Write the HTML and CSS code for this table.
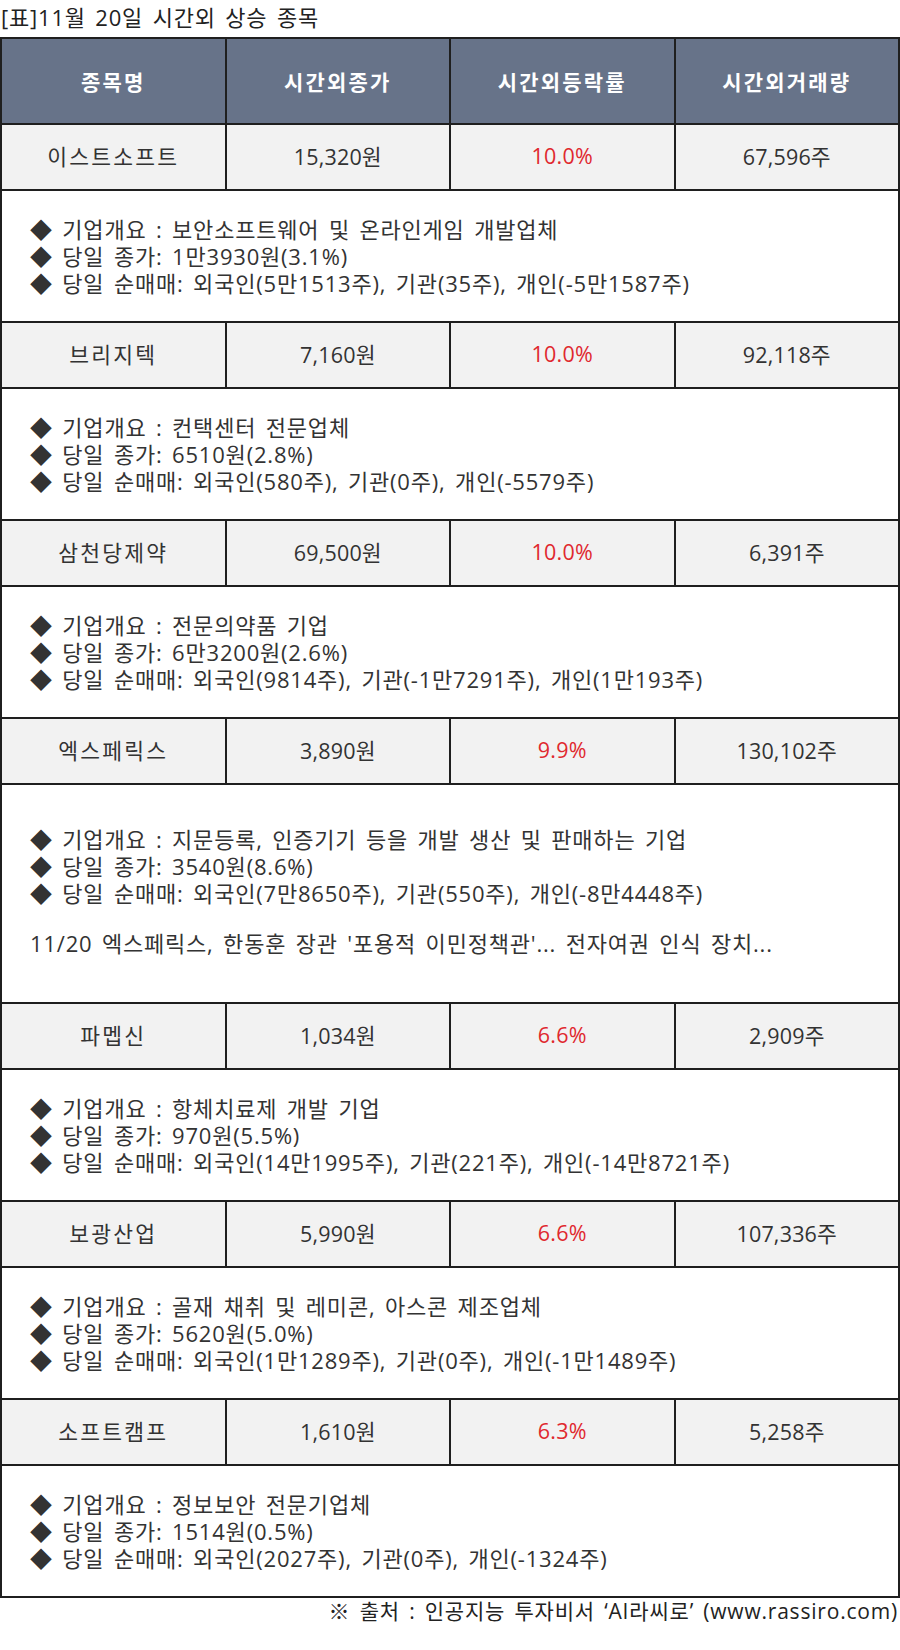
FILE: index.html
```html
<!DOCTYPE html>
<html lang="ko">
<head>
<meta charset="utf-8">
<title>11월 20일 시간외 상승 종목</title>
<link rel="stylesheet" href="styles.css">
</head>
<body>
<p class="title">[표]11월 20일 시간외 상승 종목</p>
<table class="stocks">
  <colgroup><col><col><col><col></colgroup>
  <thead>
    <tr><th>종목명</th><th>시간외종가</th><th>시간외등락률</th><th>시간외거래량</th></tr>
  </thead>
  <tbody>
    <tr class="row"><td class="name">이스트소프트</td><td>15,320원</td><td class="up">10.0%</td><td>67,596주</td></tr>
    <tr class="detail"><td colspan="4">
      <p>◆ 기업개요 : 보안소프트웨어 및 온라인게임 개발업체</p>
      <p>◆ 당일 종가: 1만3930원(3.1%)</p>
      <p>◆ 당일 순매매: 외국인(5만1513주), 기관(35주), 개인(-5만1587주)</p>
    </td></tr>

    <tr class="row"><td class="name">브리지텍</td><td>7,160원</td><td class="up">10.0%</td><td>92,118주</td></tr>
    <tr class="detail"><td colspan="4">
      <p>◆ 기업개요 : 컨택센터 전문업체</p>
      <p>◆ 당일 종가: 6510원(2.8%)</p>
      <p>◆ 당일 순매매: 외국인(580주), 기관(0주), 개인(-5579주)</p>
    </td></tr>

    <tr class="row"><td class="name">삼천당제약</td><td>69,500원</td><td class="up">10.0%</td><td>6,391주</td></tr>
    <tr class="detail"><td colspan="4">
      <p>◆ 기업개요 : 전문의약품 기업</p>
      <p>◆ 당일 종가: 6만3200원(2.6%)</p>
      <p>◆ 당일 순매매: 외국인(9814주), 기관(-1만7291주), 개인(1만193주)</p>
    </td></tr>

    <tr class="row"><td class="name">엑스페릭스</td><td>3,890원</td><td class="up">9.9%</td><td>130,102주</td></tr>
    <tr class="detail detail-news"><td colspan="4">
      <p>◆ 기업개요 : 지문등록, 인증기기 등을 개발 생산 및 판매하는 기업</p>
      <p>◆ 당일 종가: 3540원(8.6%)</p>
      <p>◆ 당일 순매매: 외국인(7만8650주), 기관(550주), 개인(-8만4448주)</p>
      <p class="news">11/20 엑스페릭스, 한동훈 장관 '포용적 이민정책관'... 전자여권 인식 장치...</p>
    </td></tr>

    <tr class="row"><td class="name">파멥신</td><td>1,034원</td><td class="up">6.6%</td><td>2,909주</td></tr>
    <tr class="detail"><td colspan="4">
      <p>◆ 기업개요 : 항체치료제 개발 기업</p>
      <p>◆ 당일 종가: 970원(5.5%)</p>
      <p>◆ 당일 순매매: 외국인(14만1995주), 기관(221주), 개인(-14만8721주)</p>
    </td></tr>

    <tr class="row"><td class="name">보광산업</td><td>5,990원</td><td class="up">6.6%</td><td>107,336주</td></tr>
    <tr class="detail"><td colspan="4">
      <p>◆ 기업개요 : 골재 채취 및 레미콘, 아스콘 제조업체</p>
      <p>◆ 당일 종가: 5620원(5.0%)</p>
      <p>◆ 당일 순매매: 외국인(1만1289주), 기관(0주), 개인(-1만1489주)</p>
    </td></tr>

    <tr class="row"><td class="name">소프트캠프</td><td>1,610원</td><td class="up">6.3%</td><td>5,258주</td></tr>
    <tr class="detail"><td colspan="4">
      <p>◆ 기업개요 : 정보보안 전문기업체</p>
      <p>◆ 당일 종가: 1514원(0.5%)</p>
      <p>◆ 당일 순매매: 외국인(2027주), 기관(0주), 개인(-1324주)</p>
    </td></tr>
  </tbody>
</table>
<p class="source">※ 출처 : 인공지능 투자비서 ‘AI라씨로’ (www.rassiro.com)</p>
</body>
</html>
```
FILE: styles.css
```css
html, body {
  margin: 0;
  padding: 0;
  background: #ffffff;
}

body {
  font-family: "Open Sans", "Noto Sans CJK KR", "Noto Sans", sans-serif;
  color: #333333;
  width: 900px;
}

.title {
  margin: 0;
  height: 37px;
  line-height: 34px;
  font-size: 22px;
  letter-spacing: 0.8px;
  word-spacing: 3px;
  color: #222222;
  padding-left: 1px;
}

.stocks {
  width: 900px;
  border-collapse: collapse;
  table-layout: fixed;
}

.stocks col {
  width: 25%;
}

.stocks th,
.stocks td {
  border: 2px solid #1f1f1f;
  padding: 0;
}

.stocks thead tr {
  height: 86px;
}

.stocks th {
  background: #677389;
  color: #ffffff;
  font-weight: 700;
  font-size: 21px;
  letter-spacing: 2.2px;
  text-align: center;
  vertical-align: middle;
}

.stocks .row {
  height: 66px;
}

.stocks .row td {
  background: #f2f2f2;
  text-align: center;
  vertical-align: middle;
  font-size: 21.5px;
  letter-spacing: 0.2px;
  color: #333333;
  padding-bottom: 4px;
}

.stocks .row td.name {
  letter-spacing: 2.2px;
}

.stocks .row td.up {
  color: #e0282e;
  letter-spacing: 0.2px;
}

.stocks .detail td {
  background: #ffffff;
  padding: 25px 28px 24px;
  font-size: 22px;
  letter-spacing: 0.8px;
  word-spacing: 3px;
  line-height: 27px;
  color: #333333;
  text-align: left;
}

.stocks .detail p {
  margin: 0;
  white-space: nowrap;
}

.stocks .detail-news td {
  padding-top: 41px;
  padding-bottom: 45px;
}

.stocks .detail .news {
  margin-top: 23px;
}

.source {
  margin: 0;
  padding-top: 1px;
  text-align: right;
  font-size: 21px;
  letter-spacing: 0.8px;
  word-spacing: 3px;
  line-height: 24px;
  color: #222222;
  padding-right: 2px;
}
```
